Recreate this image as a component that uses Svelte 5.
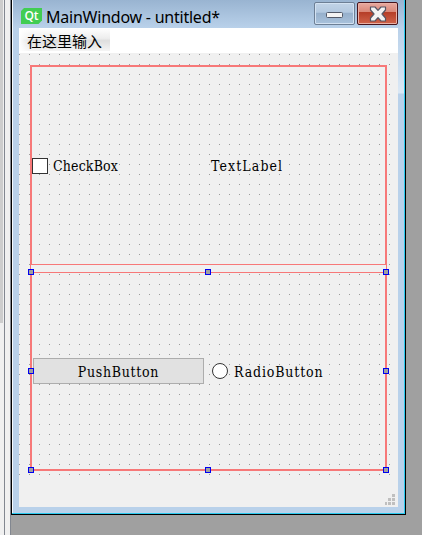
<script>
  const handles = [
    [0, 0], [1, 0], [2, 0],
    [0, 1], [2, 1],
    [0, 2], [1, 2], [2, 2]
  ];
  const xs = [9, 186, 364];
  const ys = [216, 315, 414];
</script>

<div class="desktop">
  <div class="dock"><div class="scroll"></div></div>
  <div class="window">
    <header>
      <svg class="logo" width="21" height="16" viewBox="0 0 21 16">
        <path d="M3 0H21V12.5L17.5 16H0V3Z" fill="#41cd52" />
      </svg>
      <span class="qt">Qt</span>
      <span class="title">MainWindow - untitled*</span>
      <button class="cap min" aria-label="Minimize">
        <svg width="17" height="6"><rect x=".5" y=".5" width="16" height="5" rx="1" fill="#f4f4f4" stroke="#535a69" /></svg>
      </button>
      <button class="cap close" aria-label="Close">
        <svg width="18" height="16" viewBox="0 0 18 16">
          <path d="M1.500 1H6L9 4.300L12 1H16.500V4L13 8L16.500 12V15H12L9 11.700L6 15H1.500V12L5 8L1.500 4Z" fill="#f3f3f3" stroke="#555564" stroke-width="1.2" stroke-linejoin="round" />
        </svg>
      </button>
    </header>
    <nav><div class="item">在这里输入</div></nav>
    <main>
      <div class="layout top">
        <span class="box"></span>
        <span class="txt check">CheckBox</span>
        <span class="txt label">TextLabel</span>
      </div>
      <div class="gap"></div>
      <div class="layout bottom">
        <div class="push"><span class="txt pushtext">PushButton</span></div>
        <span class="radio"></span>
        <span class="txt radiotext">RadioButton</span>
      </div>
      {#each handles as [c, r]}
        <i class="handle" style="left:{xs[c]}px;top:{ys[r]}px"></i>
      {/each}
      <svg class="grip" width="11" height="11" fill="#bfbfbf">
        <path d="M8 0h3v3h-3zM4 4h3v3h-3zM8 4h3v3h-3zM1 8h2v3h-2zM4 8h3v3h-3zM8 8h3v3h-3z" />
      </svg>
    </main>
  </div>
</div>

<style>
  :global(body) { margin: 0; overflow: hidden; }
  .desktop { display: flex; width: 422px; height: 535px; background: #a0a0a0; }
  .dock { box-sizing: border-box; width: 11px; height: 535px; background: linear-gradient(90deg, transparent 4px, #828790 4px, #828790 5px, transparent 5px), #f0f0f0; border-right: 1px solid #828790; }
  .scroll { width: 3px; height: 323px; background: #cdcdcd; }
  .window {
    box-sizing: border-box; width: 395px; height: 515px;
    border: solid #000; border-width: 0 1px 1px;
    padding: 0 7px 7px;
    box-shadow: inset -1px -1px #29c9ee, inset 1px 0 #f5faff;
    background: linear-gradient(#99b4d1 0, #b9d1ea 28px, #dbe8f5 93px, #b9d1ea 94px) right / 8px 100% no-repeat,
      linear-gradient(#99b4d1 0, #b9d1ea 28px, #b9d1ea 100%);
  }
  header { display: flex; height: 28px; align-items: flex-start; }
  .logo { margin: 8px 0 0 2px; flex: none; }
  .qt { width: 21px; margin: 8px 0 0 -21px; text-align: center; font: 600 12px/15px "Open Sans", sans-serif; color: #fff; flex: none; }
  .title { width: 272px; margin: 6px 0 0 4px; font: 16px/22px "Noto Sans", sans-serif; letter-spacing: -0.23px; white-space: nowrap; color: #000; flex: none; }
  .cap { display: flex; box-sizing: border-box; width: 41px; height: 23px; margin: 2px 0 0; padding: 0; align-items: center; justify-content: center; border-radius: 2px; flex: none; }
  .min { border: 1px solid #6d7f95; background: linear-gradient(#c1d3e7 0, #b2c8df 45%, #95afcb 46%, #a9c2dc 100%); box-shadow: inset 0 0 0 1px #d3e2f2; margin-left: -4px; padding-top: 3px; }
  .close { border: 1px solid #47141c; background: linear-gradient(#e8aaa0 0, #d98676 44%, #b63e28 45%, #d0644b 100%); box-shadow: inset 0 0 0 1px #e9b0a5; margin-left: 2px; }
  nav { height: 25px; background: #fff; }
  .item { box-sizing: border-box; width: 91px; height: 23px; padding-left: 8px; background: linear-gradient(90deg, #fff 0, #fff0 12px), linear-gradient(#fff, #ededed 45%, #dedede 55%, #f4f4f4); font: 15px/26px "Noto Sans CJK SC", sans-serif; white-space: nowrap; color: #000; }
  main {
    position: relative; box-sizing: border-box; width: 379px; height: 454px; padding: 12px 0 0 11px;
    background: conic-gradient(from 270deg at 1px 1px, #9b9b9b 90deg, transparent 0) 0 1px / 10px 10px;
    background-color: #f0f0f0;
  }
  main::after { content: ""; position: absolute; left: 0; top: 422px; width: 379px; height: 32px; background: #f0f0f0; }
  .layout { box-sizing: border-box; display: flex; width: 357px; align-items: center; border: 2px solid #f77878; }
  .top { height: 200px; border-bottom-width: 1px; }
  .gap { box-sizing: border-box; width: 357px; height: 7px; border: solid #f77878; border-width: 0 1px; }
  .bottom { height: 199px; border-top-width: 1px; }
  .box { box-sizing: border-box; width: 16px; height: 16px; border: 1px solid #333; background: #fff; flex: none; }
  .txt { font: 14px/18px "DejaVu Serif Condensed", "DejaVu Serif", serif; font-stretch: condensed; white-space: nowrap; color: #000; flex: none; }
  .check { width: 158px; margin: 1px 0 0 5px; letter-spacing: 0.15px; }
  .label { margin-top: 1px; letter-spacing: 1.1px; }
  .push { box-sizing: border-box; display: flex; width: 171px; height: 26px; margin-left: 1px; align-items: center; justify-content: center; border: 1px solid #adadad; background: #e1e1e1; flex: none; }
  .pushtext { margin-top: 2px; letter-spacing: 0.7px; }
  .radio { box-sizing: border-box; width: 16px; height: 16px; margin: 0 0 1px 8px; border: 1px solid #333; border-radius: 50%; background: #fff; flex: none; }
  .radiotext { margin: 1px 0 0 6px; letter-spacing: 0.85px; }
  .handle { position: absolute; box-sizing: border-box; width: 6px; height: 6px; border: 1px solid #0000f0; background: #a0a0a0; }
  .grip { position: absolute; z-index: 1; right: 3px; bottom: 2px; }
</style>
